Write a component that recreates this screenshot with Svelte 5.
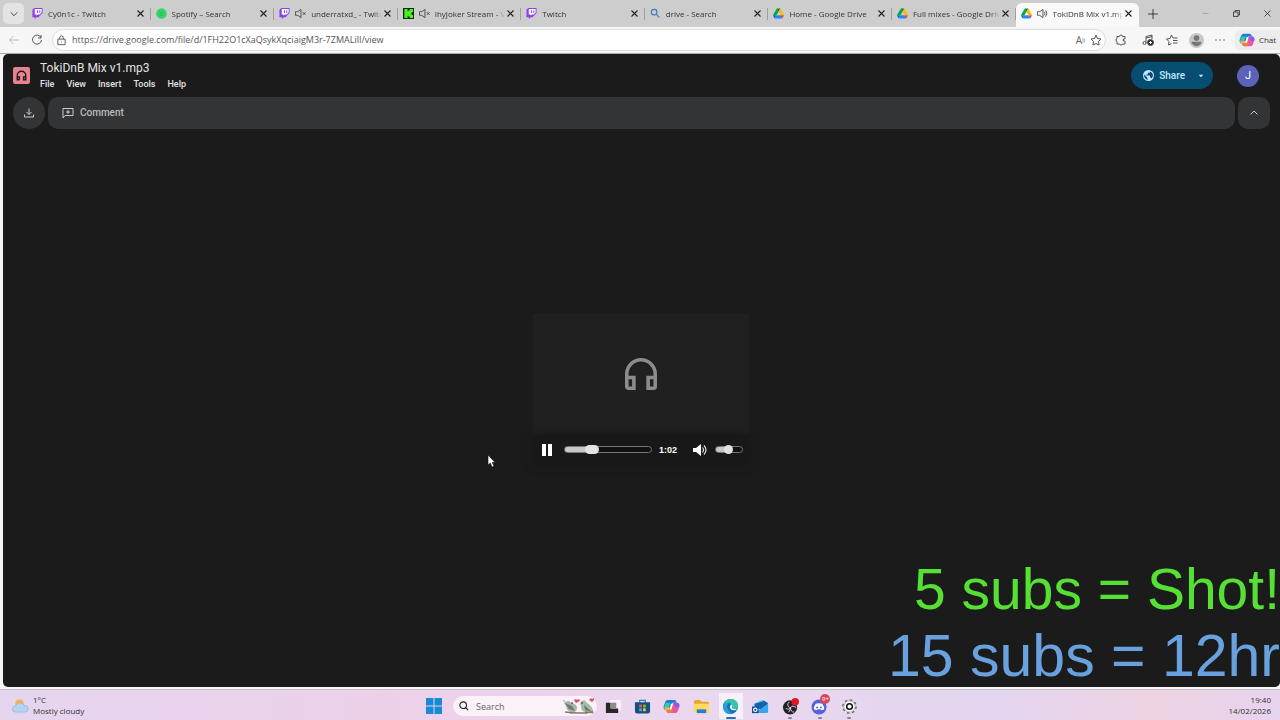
<script lang="ts">
	type Tab = { icon: string; title: string; sound?: 'muted' | 'on'; active?: boolean };

	const tabs: Tab[] = [
		{ icon: 'twitch', title: 'Cy0n1c - Twitch' },
		{ icon: 'spotify', title: 'Spotify – Search' },
		{ icon: 'twitch', title: 'underratxd_ - Twitch', sound: 'muted' },
		{ icon: 'kick', title: 'IhyJoker Stream - Vi', sound: 'muted' },
		{ icon: 'twitch', title: 'Twitch' },
		{ icon: 'search', title: 'drive - Search' },
		{ icon: 'drive', title: 'Home - Google Drive' },
		{ icon: 'drive', title: 'Full mixes - Google Drive' },
		{ icon: 'drive', title: 'TokiDnB Mix v1.mp3', sound: 'on', active: true }
	];
	const menus = ['File', 'View', 'Insert', 'Tools', 'Help'];
	const apps = [
		{ name: 'Task view', icon: 'taskview' },
		{ name: 'Microsoft Store', icon: 'store' },
		{ name: 'Copilot', icon: 'copilot' },
		{ name: 'File Explorer', icon: 'folder' },
		{ name: 'Microsoft Edge', icon: 'edge', active: true },
		{ name: 'Outlook', icon: 'outlook' },
		{ name: 'OBS Studio', icon: 'obs', running: true },
		{ name: 'Discord', icon: 'discord', running: true, badge: '9+' },
		{ name: 'Settings', icon: 'settings', running: true }
	];

	let url = $state('https://drive.google.com/file/d/1FH22O1cXaQsykXqciaigM3r-7ZMALilI/view');
	let query = $state('');
	let position = $state(28);
	let volume = $state(48);
</script>

{#snippet glyph(name: string)}
	{#if name === 'twitch'}
		<svg class="fav" viewBox="0 0 24 24">
			<path fill="#8a3ff0" d="M5 0 1 4v16h5v4l4-4h4l9-9V0z" />
			<path fill="#fff" d="M6 2h15v8l-4 4h-4l-3 3v-3H6z" />
			<path fill="#8a3ff0" d="M11 5h2v6h-2zM16 5h2v6h-2z" />
		</svg>
	{:else if name === 'spotify'}
		<svg class="fav" viewBox="0 0 24 24">
			<circle cx="12" cy="12" r="11.5" fill="#35d567" />
			<path d="M6 9q7-2 12 1M7 12.500q6-1.500 10 1M7.500 16q5-1 8 .8" fill="none" stroke="#2ab556" stroke-width="1.500" />
		</svg>
	{:else if name === 'kick'}
		<svg class="fav" viewBox="0 0 24 24">
			<path fill="#0a2d06" d="M0 0h24v24H0z" />
			<path fill="#4cf320" d="M3 2h7v5h2V5h3V2h7v7h-3v3h-2v1h2v2h3v7h-7v-3h-3v-2h-2v5H3z" />
		</svg>
	{:else if name === 'search'}
		<svg class="fav" viewBox="0 0 24 24" fill="none" stroke="#3b78c4" stroke-width="2.500">
			<circle cx="9" cy="9" r="6" /><path d="m13.500 13.500 7 7" />
		</svg>
	{:else if name === 'drive'}
		<svg class="fav" viewBox="0 -4 87.300 86">
			<path fill="#0066da" d="m6.600 66.850 3.850 6.650c.8 1.400 1.950 2.500 3.300 3.300l13.750-23.800H0c0 1.550.4 3.100 1.200 4.500z" />
			<path fill="#00ac47" d="M43.650 25 29.900 1.200c-1.350.8-2.500 1.900-3.300 3.300l-25.400 44A9.060 9.060 0 0 0 0 53h27.500z" />
			<path fill="#ea4335" d="M73.550 76.800c1.350-.8 2.500-1.900 3.300-3.300l9.250-16c.8-1.400 1.200-2.950 1.200-4.500H59.800l5.850 11.500z" />
			<path fill="#00832d" d="M43.650 25 57.400 1.200C56.050.4 54.500 0 52.900 0H34.400c-1.600 0-3.150.45-4.500 1.200z" />
			<path fill="#2684fc" d="M59.800 53H27.500L13.750 76.800c1.350.8 2.900 1.200 4.500 1.200h50.800c1.600 0 3.150-.45 4.500-1.200z" />
			<path fill="#ffba00" d="m73.400 26.500-12.700-22c-.8-1.400-1.950-2.500-3.300-3.300L43.650 25 59.800 53h27.450c0-1.550-.4-3.100-1.200-4.500z" />
		</svg>
	{:else if name === 'taskview'}
		<svg viewBox="0 0 18 18">
			<rect x="6" y="2" width="12" height="11" rx="1" fill="#f8f3f8" />
			<path fill="#2a2628" d="M2 5h5v6h8v5H2z" />
			<path fill="#8f8a8e" d="M7 5h6v6H7z" />
		</svg>
	{:else if name === 'store'}
		<svg viewBox="0 0 18 18">
			<path d="M6 5V2.500h6V5" fill="none" stroke="#2c80bd" stroke-width="1.300" />
			<path fill="#164f83" d="M1 4.500h16V14a2.500 2.500 0 0 1-2.500 2.500h-11A2.500 2.500 0 0 1 1 14z" />
			<path fill="#ed5a2c" d="M5.500 7h3v3h-3z" /><path fill="#83bd25" d="M9.500 7h3v3h-3z" />
			<path fill="#35a9e5" d="M5.500 11h3v3h-3z" /><path fill="#f8c12c" d="M9.500 11h3v3h-3z" />
		</svg>
	{:else if name === 'copilot'}
		<svg viewBox="0 0 18 18">
			<path fill="#187fd8" d="M6 2h6c1.500 0 2 1 2.500 3H10L7 13H4C1 13 0 11 1 8l1.500-4C3 2.500 4 2 6 2z" />
			<path fill="#3fc5a8" d="M3 5 1.500 9q-.5 4 2.500 4h1l2-6q.5-2 2-2z" />
			<path fill="#f3b83b" d="M1.500 10q0 3 3 3H7l1-3z" />
			<path fill="#e857a2" d="M12 16H6c-1.500 0-2-1-2.500-3H8l3-8h3c3 0 4 2 3 5l-1.500 4c-.5 1.500-1.500 2-3.500 2z" />
			<path fill="#8c58e5" d="M11 5h3c3 0 4 2 3 5h-3l-2-3z" />
			<path fill="#f5793b" d="M3.500 13H8l1-2 2 2q-1 3-3 3H6q-2 0-2.500-3z" />
			<path fill="#fff" d="M8.500 6h2l-1.500 6h-2z" />
		</svg>
	{:else if name === 'folder'}
		<svg viewBox="0 0 18 18">
			<path fill="#e5a72c" d="M1 4q0-2 2-2h4l2 2h6q2 0 2 2v8H1z" />
			<path fill="#ffdb62" d="M1 6h16v8q0 2-2 2H3q-2 0-2-2z" /><path fill="#287fc8" d="M4 12h10v4H4z" />
		</svg>
	{:else if name === 'edge'}
		<svg viewBox="0 0 18 18">
			<circle cx="9" cy="9" r="8" fill="#1671ba" />
			<path fill="#36c6ae" d="M1.500 7C3 2 8 0 12 1.700 16 3 18 7 16.500 10c-1 2-5 2-6 0C12 7 9 5 6 5 4 5 2.500 6 1.500 7z" />
			<path fill="#249fdc" d="M1 9C1 5 5 4 8 5q-5 3-1 8l3 4C5 18 1 14 1 9z" />
			<path fill="#fff" d="M9.500 7q2 0 1 3.500 2 2 6 .5-3 3-6.500 1.500Q7 10 9.500 7z" />
		</svg>
	{:else if name === 'outlook'}
		<svg viewBox="0 0 18 18">
			<path fill="#4dc1f2" d="m2 6 9-4 6 3v9q0 2-2 2H4q-2 0-2-2z" />
			<path fill="#1760af" d="m3 6 10-3 4 3-8 6-6-3z" />
			<path fill="#35a7ea" d="m8 13 9-6v7q0 2-2 2H6z" />
			<path fill="#124f98" d="M0 9h7v7H0z" />
			<circle cx="3.500" cy="12.500" r="1.800" fill="none" stroke="#fff" stroke-width="1.200" />
		</svg>
	{:else if name === 'obs'}
		<svg viewBox="0 0 18 18">
			<circle cx="8.500" cy="10" r="7.500" fill="#24202a" />
			<path d="M8 4q-4 3 0 6 2 2-1 5M15 10q-4-3-6 0-1 3-5 1M13 15q-4 0-4-5" fill="none" stroke="#ddd" stroke-width="1" />
			<circle cx="14" cy="4" r="4" fill="#e51525" />
		</svg>
	{:else if name === 'discord'}
		<svg viewBox="0 0 18 18">
			<circle cx="8.500" cy="9.500" r="8" fill="#5562df" />
			<path fill="#fff" d="M5 6q3-1 7 0 2 3 2 6l-3 1-1-1H7l-1 1-3-1q0-3 2-6z" />
			<circle cx="6.500" cy="10" r="1.100" fill="#5562df" /><circle cx="10.500" cy="10" r="1.100" fill="#5562df" />
		</svg>
	{:else if name === 'settings'}
		<svg viewBox="0 0 18 18" fill="none">
			<circle cx="9" cy="9" r="7" fill="#fff" stroke="#6a656a" stroke-width="1.500" stroke-dasharray="2.800 2.700" />
			<circle cx="9" cy="9" r="6" fill="#fff" stroke="#777" stroke-width=".7" />
			<circle cx="9" cy="9" r="3" stroke="#111" stroke-width="1.600" />
		</svg>
	{/if}
{/snippet}

{#snippet speaker(state: string)}
	<svg class="speaker" viewBox="0 0 24 24" fill="none" stroke="#333" stroke-width="1.700">
		<path d="M1 8v8h5l7 5V3L6 8z" />
		{#if state === 'muted'}
			<path d="m17 9 6 6m0-6-6 6" />
		{:else}
			<path d="M16 8q3 4 0 8M19 5q5 7 0 14" />
		{/if}
	</svg>
{/snippet}

<div class="screen">
	<header class="tabbar">
		<button class="tab-search" aria-label="Search tabs">
			<svg viewBox="0 0 12 12"><path d="m2 4 4 4 4-4" /></svg>
		</button>
		<div class="tabs">
			{#each tabs as tab}
				<div class="tab" class:active={tab.active}>
					{@render glyph(tab.icon)}
					{#if tab.sound}{@render speaker(tab.sound)}{/if}
					<span class="title">{tab.title}</span>
					<button class="close" aria-label="Close tab">
						<svg viewBox="0 0 12 12"><path d="m2 2 8 8m0-8-8 8" /></svg>
					</button>
				</div>
			{/each}
		</div>
		<div class="window">
			<button aria-label="New tab"><svg viewBox="0 0 12 12"><path d="M6 0v12M0 6h12" /></svg></button>
			<button class="minimise" aria-label="Minimise"><svg viewBox="0 0 12 12"><path d="M2 6h8" stroke="#999" /></svg></button>
			<button aria-label="Restore">
				<svg viewBox="0 0 12 12"><path d="M2 4h6v6H2zM4 4V2h6v6H8" /></svg>
			</button>
			<button aria-label="Close"><svg viewBox="0 0 12 12"><path d="m2 2 8 8m0-8-8 8" /></svg></button>
		</div>
	</header>

	<div class="toolbar">
		<button class="faint" aria-label="Back"><svg viewBox="0 0 24 24"><path d="M22 12H3m8-8-8 8 8 8" /></svg></button>
		<button aria-label="Refresh">
			<svg viewBox="0 0 24 24"><path d="M20 7a9 9 0 1 0 1 5M20 2v6h-6" /></svg>
		</button>
		<div class="address">
			<svg viewBox="0 0 24 24"><path d="M4 9h16v12H4zM8 9V6q0-4 4-4t4 4v3M12 14v2" /></svg>
			<input type="text" aria-label="Address" bind:value={url} />
			<button class="read" aria-label="Read aloud">A<sup>))</sup></button>
			<button aria-label="Add to favourites">
				<svg viewBox="0 0 24 24"><path d="m12 2 3 7 7 1-5 5 1 7-6-3-6 3 1-7-5-5 7-1z" /></svg>
			</button>
		</div>
		<div class="tools">
			<button aria-label="Extensions">
				<svg viewBox="0 0 24 24"><path d="M4 5h5q0-3 3-3t3 3h5v5q-4-1-4 2t4 2v6h-5q0 2-3 2t-3-2H4v-5q-2 0-2-3t2-3z" /></svg>
			</button>
			<button aria-label="Media">
				<svg viewBox="0 0 24 24"><path d="M8 18V5l12-3v8M8 8l12-3" /><circle cx="5" cy="18" r="3" /><circle cx="17" cy="17" r="6" fill="#222" /><path d="M17 14v6m-3-3h6" stroke="#fff" /></svg>
			</button>
			<button aria-label="Favourites">
				<svg viewBox="0 0 24 24"><path d="M11 19 5 22l1-7-5-5 7-1 3-7 3 6h9M14 13h9M14 18h9" /></svg>
			</button>
			<button aria-label="Profile">
				<svg class="profile" viewBox="0 0 24 24"><circle cx="12" cy="12" r="12" fill="#c9c7c5" stroke="none" /><circle cx="12" cy="8" r="4.500" fill="#777" stroke="none" /><path d="M4 16q0-2 2-2h12q2 0 2 2-3 5-8 5t-8-5z" fill="#777" stroke="none" /></svg>
			</button>
			<button aria-label="More">
				<svg viewBox="0 0 24 24"><path d="M3 12h2m6 0h2m6 0h2" stroke-width="3" /></svg>
			</button>
		</div>
		<button class="chat">{@render glyph('copilot')}Chat</button>
	</div>

	<main>
		<div class="file-head">
			<svg class="file-icon" viewBox="0 0 24 24">
				<rect width="24" height="24" rx="3" fill="#e8838d" />
				<path d="M9 18H6v-6a6 6 0 0 1 12 0v6h-3v-4h3M6 14h3v4" fill="none" stroke="#281b1e" stroke-width="2" />
			</svg>
			<div class="file-info">
				<h1>TokiDnB Mix v1.mp3</h1>
				<nav>
					{#each menus as menu}<button>{menu}</button>{/each}
				</nav>
			</div>
			<div class="share">
				<button>
					<svg viewBox="2 2 20 20"><path fill="#c2e7ff" d="M12 2a10 10 0 1 0 0 20 10 10 0 0 0 0-20zm-1 17.930A8 8 0 0 1 4.210 10.210L9 15v1a2 2 0 0 0 2 2zm6.900-2.540A2 2 0 0 0 16 16h-1v-3a1 1 0 0 0-1-1H8v-2h2a1 1 0 0 0 1-1V7h2a2 2 0 0 0 2-2v-.41a8 8 0 0 1 2.900 12.800z" /></svg>
					Share
				</button>
				<button class="caret" aria-label="Sharing options"><svg viewBox="0 0 10 10"><path d="m1 3 4 4 4-4z" fill="#c2e7ff" /></svg></button>
			</div>
			<button class="avatar" aria-label="Account J">J</button>
		</div>

		<div class="actions">
			<button class="round" aria-label="Download">
				<svg viewBox="0 0 24 24"><path d="M12 3v12m-5-5 5 5 5-5M3 15v5h18v-5" /></svg>
			</button>
			<div class="strip">
				<button>
					<svg viewBox="0 0 24 24"><path d="M2 22V3h20v14H6zM12 6v8m-4-4h8" /></svg>
					Comment
				</button>
			</div>
			<button class="round square" aria-label="Hide controls">
				<svg viewBox="0 0 24 24"><path d="m5 15 7-7 7 7" /></svg>
			</button>
		</div>

		<div class="stage">
			<div class="player">
				<div class="cover">
					<svg viewBox="3 3 18 18"><path fill="#8c8c8c" d="M12 3a9 9 0 0 0-9 9v7c0 1.100.9 2 2 2h4v-8H5v-1a7 7 0 0 1 14 0v1h-4v8h4a2 2 0 0 0 2-2v-7a9 9 0 0 0-9-9zM7 15v4H5v-4zm12 4h-2v-4h2z" /></svg>
				</div>
				<div class="controls">
					<button aria-label="Pause"><svg viewBox="0 0 12 12"><path d="M1 0h4v12H1zM7 0h4v12H7z" fill="#fff" /></svg></button>
					<input
						class="seek"
						type="range"
						aria-label="Seek"
						bind:value={position}
						style="--fill: {position}%"
					/>
					<time>1:02</time>
					<button class="mute" aria-label="Mute">
						<svg viewBox="0 0 14 14"><path d="M0 5h3l5-4v12L3 9H0z" fill="#fff" /><path d="M9.500 4.500q2 2.500 0 5M11 2.500q4 4.500 0 9" fill="none" stroke="#ddd" stroke-width="1.200" /></svg>
					</button>
					<input
						class="volume"
						type="range"
						aria-label="Volume"
						bind:value={volume}
						style="--fill: {volume}%"
					/>
				</div>
			</div>
		</div>

		<svg class="cursor" viewBox="0 0 9 14"><path d="M1 1v10l2.300-2 1.700 4 2-1-1.800-3.500H8z" fill="#fff" stroke="#111" stroke-width=".6" /></svg>
		<div class="goals">
			<p class="shot">5 subs = Shot!</p>
			<p class="hours">15 subs = 12hr</p>
		</div>
	</main>

	<footer class="taskbar">
		<button class="weather">
			<svg viewBox="0 0 18 18">
				<circle cx="8" cy="7" r="4.500" fill="#f3b54a" />
				<path d="M4 16a3.500 3.500 0 0 1 0-7 5 5 0 0 1 9 0 3.500 3.500 0 0 1 1 7z" fill="#b6d2f3" stroke="#83acd8" stroke-width=".6" />
			</svg>
			<span>1°C<br />Mostly cloudy</span>
		</button>
		<div class="dock">
			<button class="start" aria-label="Start">
				<svg viewBox="0 0 16 16"><path d="M0 0h7.500v7.500H0zM8.500 0H16v7.500H8.500zM0 8.500h7.500V16H0zM8.500 8.500H16V16H8.500z" fill="#168ad3" /></svg>
			</button>
			<label class="find">
				<svg viewBox="0 0 12 12"><circle cx="5" cy="5" r="4" /><path d="m8 8 3 3" /></svg>
				<input type="text" placeholder="Search" aria-label="Search" bind:value={query} />
				<svg class="birds" viewBox="0 0 32 18">
					<path d="M1 6q5-4 7 0 4 0 6 4 0 6-5 5-5 0-6-6z" fill="#a5b4ad" />
					<path d="m2 6 4 6 6 2-3-5z" fill="#697d78" />
					<path d="M30 13q-2-5-6-7-2-4-5-2-3 2-1 5 0 6 5 6 4 1 8 2z" fill="#a9bba2" />
					<path d="m21 8 8 7-7-2z" fill="#627e76" />
					<path d="M2 15q14 2 28 0M8 15v2M23 14v3" fill="none" stroke="#907662" />
					<path d="m13 6-2-3 2-1 1 1 2-1 1 2zM29 5l-3-2 2-2 1 1 2-1v2zM1 5 0 3l2 1z" fill="#e34d66" />
					<circle cx="9" cy="6" r=".8" fill="#222" /><circle cx="19" cy="6" r=".8" fill="#222" />
				</svg>
			</label>
			<div class="apps">
				{#each apps as app}
					<button class="app" class:current={app.active} class:running={app.running} aria-label={app.name}>
						{@render glyph(app.icon)}
						{#if app.badge}<span class="badge">{app.badge}</span>{/if}
					</button>
				{/each}
			</div>
		</div>
		<div class="clock">19:40<br />14/02/2026</div>
	</footer>
</div>

<style>
	:global(body) {
		margin: 0;
	}
	.screen {
		display: flex;
		flex-direction: column;
		min-height: 100vh;
		overflow: hidden;
		background: #f6f6f6;
		color: #333;
		font: 9px/12px 'Open Sans', 'Noto Sans', sans-serif;
	}
	button,
	input {
		margin: 0;
		padding: 0;
		border: 0;
		background: none;
		color: inherit;
		font: inherit;
	}
	button {
		display: flex;
		align-items: center;
		justify-content: center;
	}
	input {
		min-width: 0;
		outline: none;
	}
	svg {
		flex: none;
		display: block;
	}

	.tabbar {
		display: flex;
		height: 27px;
		background: #cdcdcd;
		font-size: 8px;
	}
	.tabbar button svg {
		width: 10px;
		height: 10px;
		fill: none;
		stroke: #222;
	}
	.tab-search {
		width: 21px;
		height: 21px;
		margin: 3px;
		border-radius: 5px;
		background: #e3e3e3;
	}
	.tabs {
		display: flex;
		flex: 1;
		min-width: 0;
	}
	.tab {
		position: relative;
		display: flex;
		flex: 1;
		align-items: center;
		gap: 5px;
		min-width: 0;
		padding: 0 6px 0 5px;
	}
	.tab:not(.active)::after {
		content: '';
		position: absolute;
		right: 0;
		height: 12px;
		border-right: 1px solid #a0a0a0;
	}
	.tab.active {
		margin-top: 3px;
		padding-bottom: 3px;
		border-radius: 6px 6px 0 0;
		background: #f9f9f9;
	}
	.fav,
	.speaker {
		width: 11px;
		height: 11px;
	}
	.title {
		flex: 1;
		overflow: hidden;
		white-space: nowrap;
		mask-image: linear-gradient(to right, #000 88%, transparent);
	}
	.tab .close {
		margin-left: -4px;
	}
	.tab .close svg {
		width: 9px;
		height: 9px;
		stroke-width: 1.5;
	}
	.window {
		display: flex;
		align-items: center;
		width: 141px;
	}
	.window button {
		flex: none;
		width: 27px;
	}
	.window button:nth-child(n + 2) {
		width: 31px;
	}
	.window .minimise {
		margin-left: 24px;
	}
	.window button:nth-child(n + 2) svg {
		width: 9px;
		height: 9px;
	}

	.toolbar {
		display: flex;
		align-items: center;
		height: 26px;
		padding-left: 2px;
		border-bottom: 1px solid #aaa;
	}
	.toolbar svg {
		width: 12px;
		height: 12px;
		fill: none;
		stroke: #555;
		stroke-width: 2;
	}
	.toolbar > button {
		width: 23px;
	}
	.toolbar .faint {
		opacity: 0.35;
	}
	.address {
		display: flex;
		flex: 1;
		align-items: center;
		gap: 5px;
		height: 20px;
		margin-left: 4px;
		padding: 0 3px;
		border: 1px solid #ddd;
		border-radius: 11px;
		background: #fff;
	}
	.address > svg {
		width: 11px;
		height: 11px;
	}
	.address input {
		flex: 1;
		color: #555;
	}
	.read {
		font-size: 10px;
		color: #666;
	}
	.read sup {
		font-size: 5px;
		line-height: 5px;
	}
	.tools {
		display: flex;
		margin-left: 3px;
	}
	.tools button {
		width: 24px;
	}
	.tools button:first-child {
		margin-right: 3px;
	}
	.toolbar .profile {
		width: 15px;
		height: 15px;
	}
	.toolbar .chat {
		gap: 4px;
		width: 45px;
		height: 20px;
		margin-left: 3px;
		border-radius: 5px 0 0 5px;
		background: #ececec;
		font-size: 8px;
	}
	.chat :global(svg) {
		width: 16px;
		height: 16px;
		stroke: none;
	}

	main {
		position: relative;
		display: flex;
		flex: 1;
		flex-direction: column;
		margin-left: 3px;
		overflow: hidden;
		border-radius: 5px;
		background: #1b1b1b;
		color: #e3e3e3;
		font-family: Roboto, 'Liberation Sans', sans-serif;
	}
	.file-head {
		display: flex;
		align-items: center;
		height: 43px;
		padding: 0 21px 0 10px;
	}
	.file-icon {
		width: 17px;
		height: 17px;
	}
	.file-info {
		flex: 1;
		margin-left: 10px;
	}
	h1 {
		margin: 0;
		font-size: 12px;
		font-weight: 400;
		line-height: 17px;
	}
	nav {
		display: flex;
		gap: 12px;
		font-size: 9px;
		font-weight: 500;
		line-height: 14px;
	}
	.share {
		display: flex;
		height: 27px;
		border-radius: 14px;
		background: #064d72;
		color: #c2e7ff;
		font-size: 10px;
		font-weight: 500;
	}
	.share button {
		gap: 5px;
		padding-left: 12px;
	}
	.share svg {
		width: 11px;
		height: 11px;
	}
	.share .caret {
		width: 28px;
		padding: 0 0 0 4px;
	}
	.share .caret svg {
		width: 6px;
		height: 6px;
	}
	.avatar {
		width: 22px;
		height: 22px;
		margin-left: 24px;
		border-radius: 50%;
		background: #5c63b9;
		color: #fff;
		font-size: 11px;
	}
	.actions {
		display: flex;
		gap: 3px;
		padding: 0 10px;
	}
	.actions svg {
		width: 12px;
		height: 12px;
		fill: none;
		stroke: #ccc;
		stroke-width: 2;
	}
	.round {
		width: 32px;
		height: 32px;
		border-radius: 16px;
		background: #333436;
	}
	.square {
		border-radius: 10px;
	}
	.strip {
		display: flex;
		flex: 1;
		padding-left: 14px;
		border-radius: 10px;
		background: #333436;
		color: #bbb;
		font-size: 10px;
		font-weight: 500;
	}
	.strip button {
		gap: 6px;
	}

	.stage {
		display: flex;
		flex: 1;
		align-items: center;
		justify-content: center;
		padding: 0 1px 38px 0;
	}
	.player {
		width: 216px;
	}
	.cover {
		display: flex;
		align-items: center;
		justify-content: center;
		height: 121px;
		background: #202020;
	}
	.cover svg {
		width: 32px;
		height: 32px;
	}
	.controls {
		display: flex;
		align-items: center;
		height: 30px;
		padding: 0 6px 0 8px;
		background: #181818;
		box-shadow: 0 0 8px #181818;
		color: #fff;
		font: bold 9px/12px 'Liberation Sans', sans-serif;
	}
	.controls button svg {
		width: 12px;
		height: 12px;
	}
	.controls .mute svg {
		width: 14px;
		height: 14px;
	}
	.controls input {
		appearance: none;
		box-sizing: border-box;
		height: 7px;
		border: 1px solid #777;
		border-radius: 4px;
		background: linear-gradient(to right, #c8c8c8 var(--fill), #111 var(--fill));
	}
	.controls input::-webkit-slider-thumb {
		appearance: none;
		width: 9px;
		height: 9px;
		border-radius: 5px;
		background: #e2e2e2;
	}
	.controls .seek {
		flex: 1;
		margin: 0 7px 0 11px;
	}
	.controls .seek::-webkit-slider-thumb {
		width: 14px;
	}
	.controls .volume {
		width: 28px;
		margin-left: 8px;
	}
	.mute {
		margin-left: 16px;
	}
	.cursor {
		position: absolute;
		top: 400px;
		left: 484px;
		width: 9px;
		height: 14px;
	}
	.goals {
		position: absolute;
		right: 0;
		bottom: -3px;
		font-family: 'Liberation Sans', Arial, sans-serif;
		line-height: 67px;
		text-align: right;
		white-space: nowrap;
	}
	.goals p {
		margin: 0;
	}
	.shot {
		color: #55e033;
		font-size: 57px;
	}
	.hours {
		color: #69a1df;
		font-size: 59px;
	}

	.taskbar {
		display: grid;
		grid-template-columns: 1fr auto 1fr;
		align-items: center;
		height: 30px;
		margin-top: 2px;
		padding: 0 9px 0 12px;
		border-top: 1px solid #c9bfca;
		background: linear-gradient(to right, #e5d5ee, #ecd0e8 30%, #ead8ef 55%, #e2d5ef 78%, #edd2e1 90%, #e7d4ee);
		font-size: 8px;
		line-height: 11px;
	}
	.weather {
		gap: 4px;
		justify-self: start;
		text-align: left;
	}
	.weather svg {
		width: 17px;
		height: 17px;
	}
	.dock {
		display: flex;
		align-items: center;
		padding: 2px 0 0 3px;
	}
	.start {
		width: 24px;
		height: 24px;
		margin-right: 7px;
	}
	.start svg {
		width: 16px;
		height: 16px;
	}
	.find {
		display: flex;
		align-items: center;
		gap: 7px;
		box-sizing: border-box;
		width: 144px;
		height: 20px;
		padding: 0 2px 0 6px;
		border-radius: 10px;
		background: #faf1f9;
		font-size: 9px;
	}
	.find > svg {
		width: 10px;
		height: 10px;
		fill: none;
		stroke: #222;
		stroke-width: 1.3;
	}
	.find .birds {
		width: 32px;
		height: 18px;
		stroke: none;
	}
	.find input {
		flex: 1;
	}
	.find input::placeholder {
		color: #666;
	}
	.apps {
		display: grid;
		grid-template-columns: repeat(9, 1fr);
		width: 266px;
		margin-left: 1px;
	}
	.app {
		position: relative;
		height: 26px;
	}
	.app :global(svg) {
		width: 17px;
		height: 17px;
	}
	.current {
		padding: 0 3px;
		border-radius: 3px;
		background: #f8f0f9;
		background-clip: content-box;
	}
	.current::after,
	.running::after {
		content: '';
		position: absolute;
		bottom: 0;
		width: 4px;
		height: 2px;
		border-radius: 1px;
		background: #8b838f;
	}
	.current::after {
		width: 10px;
		background: #2a72b8;
	}
	.badge {
		position: absolute;
		top: 1px;
		right: 4px;
		width: 10px;
		border-radius: 5px;
		background: #d9485a;
		color: #fff;
		font-size: 6px;
		line-height: 10px;
	}
	.clock {
		justify-self: end;
		text-align: right;
	}
</style>
